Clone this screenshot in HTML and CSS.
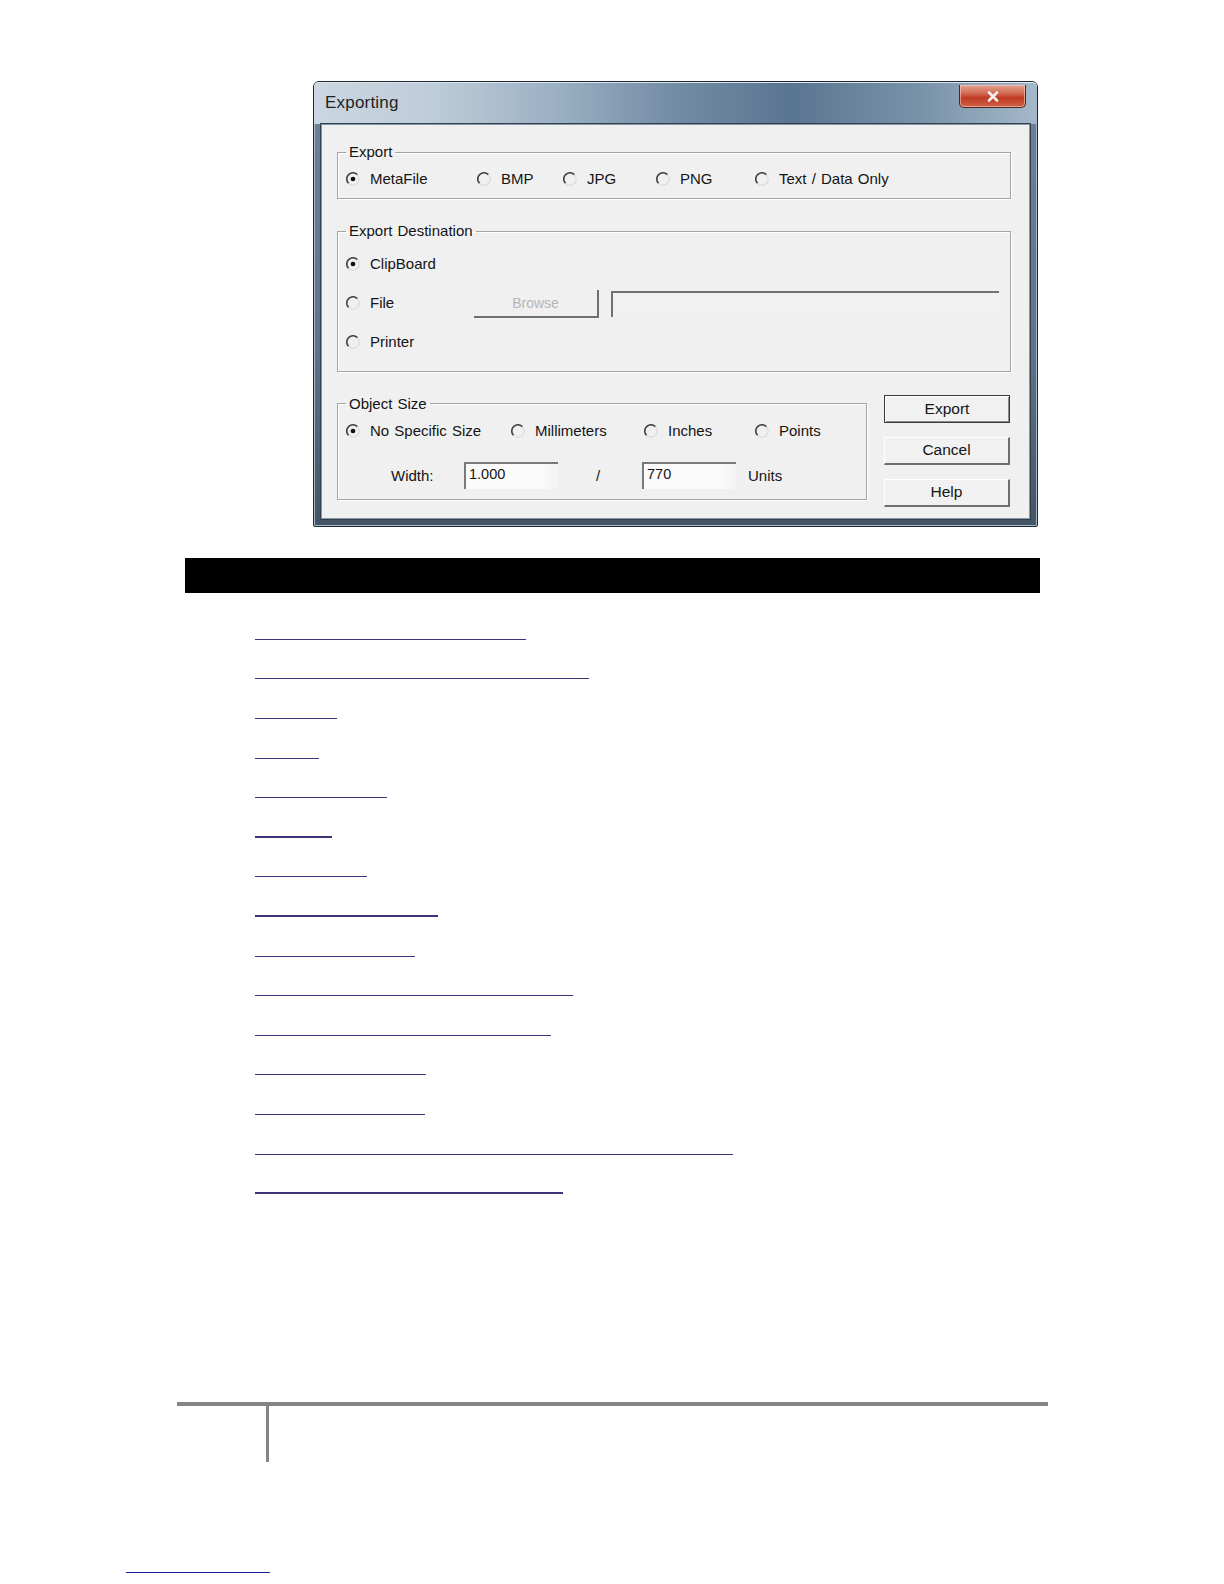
FILE: index.html
```html
<!DOCTYPE html>
<html lang="en">
<head>
<meta charset="utf-8">
<title>Exporting</title>
<link rel="stylesheet" href="styles.css">
</head>
<body>
<div class="page">
  <svg class="defs" width="0" height="0" aria-hidden="true">
    <symbol id="radio-off" viewBox="0 0 13 13">
      <path d="M10.6 2.4 A5.7 5.7 0 0 0 2.4 10.6" fill="none" stroke="#444444" stroke-width="1.5"/>
      <path d="M10.6 2.4 A5.7 5.7 0 0 1 2.4 10.6" fill="none" stroke="#d8d8d8" stroke-width="1"/>
    </symbol>
    <symbol id="radio-on" viewBox="0 0 13 13">
      <path d="M10.6 2.4 A5.7 5.7 0 0 0 2.4 10.6" fill="none" stroke="#444444" stroke-width="1.5"/>
      <path d="M10.6 2.4 A5.7 5.7 0 0 1 2.4 10.6" fill="none" stroke="#d8d8d8" stroke-width="1"/>
      <circle cx="6.5" cy="6.5" r="2.2" fill="#111111"/>
    </symbol>
  </svg>

  <div class="dialog-wrap">
    <div class="window">
      <div class="titlebar">
        <span class="title">Exporting</span>
        <div class="close">
          <svg width="14" height="11" viewBox="0 0 14 11"><path d="M3 1.5 L11 9.5 M11 1.5 L3 9.5" stroke="#f4eeee" stroke-width="2.6" stroke-linecap="round"/></svg>
        </div>
      </div>
      <div class="client">
        <fieldset class="group group-export">
          <legend>Export</legend>
          <div class="radio-row cols-export">
            <span class="radio"><svg><use href="#radio-on"/></svg>MetaFile</span>
            <span class="radio"><svg><use href="#radio-off"/></svg>BMP</span>
            <span class="radio"><svg><use href="#radio-off"/></svg>JPG</span>
            <span class="radio"><svg><use href="#radio-off"/></svg>PNG</span>
            <span class="radio"><svg><use href="#radio-off"/></svg>Text / Data Only</span>
          </div>
        </fieldset>

        <fieldset class="group group-dest">
          <legend>Export Destination</legend>
          <div class="dest-row">
            <span class="radio"><svg><use href="#radio-on"/></svg>ClipBoard</span>
          </div>
          <div class="dest-row">
            <span class="radio dest-label"><svg><use href="#radio-off"/></svg>File</span>
            <span class="browse">Browse</span>
            <span class="path-field"></span>
          </div>
          <div class="dest-row">
            <span class="radio"><svg><use href="#radio-off"/></svg>Printer</span>
          </div>
        </fieldset>

        <div class="bottom-row">
          <fieldset class="group group-size">
            <legend>Object Size</legend>
            <div class="radio-row cols-size">
              <span class="radio"><svg><use href="#radio-on"/></svg>No Specific Size</span>
              <span class="radio"><svg><use href="#radio-off"/></svg>Millimeters</span>
              <span class="radio"><svg><use href="#radio-off"/></svg>Inches</span>
              <span class="radio"><svg><use href="#radio-off"/></svg>Points</span>
            </div>
            <div class="size-row">
              <span class="size-label">Width:</span>
              <span class="num-field">1.000</span>
              <span class="slash">/</span>
              <span class="num-field">770</span>
              <span class="units">Units</span>
            </div>
          </fieldset>
          <div class="buttons">
            <span class="btn btn-default">Export</span>
            <span class="btn">Cancel</span>
            <span class="btn">Help</span>
          </div>
        </div>
      </div>
    </div>
  </div>

  <div class="black-bar"></div>

  <ul class="toc">
    <li><a class="toc-link" href="#" style="width:271px"></a></li>
    <li><a class="toc-link" href="#" style="width:334px"></a></li>
    <li><a class="toc-link" href="#" style="width:82px"></a></li>
    <li><a class="toc-link" href="#" style="width:64px"></a></li>
    <li><a class="toc-link" href="#" style="width:132px"></a></li>
    <li><a class="toc-link thick" href="#" style="width:77px"></a></li>
    <li><a class="toc-link" href="#" style="width:112px"></a></li>
    <li><a class="toc-link thick" href="#" style="width:183px"></a></li>
    <li><a class="toc-link" href="#" style="width:160px"></a></li>
    <li><a class="toc-link" href="#" style="width:318px"></a></li>
    <li><a class="toc-link" href="#" style="width:296px"></a></li>
    <li><a class="toc-link" href="#" style="width:171px"></a></li>
    <li><a class="toc-link" href="#" style="width:170px"></a></li>
    <li><a class="toc-link" href="#" style="width:478px"></a></li>
    <li><a class="toc-link thick" href="#" style="width:308px"></a></li>
  </ul>

  <footer class="footer">
    <div class="hrule"></div>
    <div class="vrule"></div>
    <a class="page-link" href="#"></a>
  </footer>
</div>
</body>
</html>
```

FILE: styles.css
```css
* { box-sizing: border-box; }

html, body {
  margin: 0;
  padding: 0;
  background: #ffffff;
  overflow: hidden;
}

body {
  font-family: "Liberation Sans", Arial, sans-serif;
  font-size: 15px;
  word-spacing: 1px;
  color: #141414;
}

.page {
  position: relative;
  width: 1224px;
  height: 1584px;
  overflow: hidden;
}

.defs {
  position: absolute;
  left: 0;
  top: 0;
  width: 0;
  height: 0;
  overflow: hidden;
}

/* ---------- dialog ---------- */
.dialog-wrap {
  padding: 81px 0 0 313px;
}

.window {
  width: 725px;
  height: 446px;
  border: 1px solid #1f2730;
  border-radius: 6px 6px 2px 2px;
  background: linear-gradient(180deg, #6d8298 0%, #5f7489 60%, #435465 100%);
  padding-bottom: 7px;
  display: flex;
  flex-direction: column;
  box-shadow: inset 0 0 0 1px #a9b9c8;
}

.titlebar {
  height: 42px;
  flex: none;
  display: flex;
  align-items: center;
  padding: 0 11px;
  border-radius: 5px 5px 0 0;
  background: linear-gradient(90deg, #cad6e1 0%, #bfcdda 16%, #9cb1c4 33%, #728ca5 50%, #5a7590 66%, #7892a9 84%, #a4b8c9 100%);
  box-shadow: inset 0 1px 0 #dfe7ee;
}

.title {
  font-size: 17px;
  color: #1f1f1f;
  letter-spacing: 0.2px;
}

.close {
  margin-left: auto;
  align-self: flex-start;
  margin-top: 3px;
  width: 67px;
  height: 23px;
  border: 1px solid #4d2720;
  border-top: none;
  border-radius: 0 0 5px 5px;
  background: linear-gradient(180deg, #e3a392 0%, #d46a52 38%, #bf3a22 58%, #cf6248 100%);
  display: flex;
  align-items: center;
  justify-content: center;
  box-shadow: inset 0 0 0 1px rgba(255, 215, 205, 0.55);
}

.client {
  flex: 1;
  margin: 0 7px;
  border: 1px solid #8596a7;
  background: #f0f0f0;
  padding: 18px 18px 0 15px;
  box-shadow: 0 0 0 1px #33414f;
}

/* group boxes */
.group {
  margin: 0;
  min-width: 0;
  border: 1px solid #a4a4a4;
  box-shadow: inset 1px 1px 0 #ffffff, 1px 1px 0 #ffffff;
  padding: 0 8px;
}

.group legend {
  padding: 0 3px;
  line-height: 18px;
  height: 18px;
  color: #141414;
}

.group-export {
  padding-top: 8px;
  padding-bottom: 9px;
}

.group-dest {
  margin-top: 23px;
  padding-top: 4px;
  padding-bottom: 9px;
}

.group-size {
  width: 530px;
  flex: none;
  padding-top: 8px;
  padding-bottom: 10px;
}

.radio-row {
  display: grid;
  height: 20px;
}

.cols-export {
  grid-template-columns: 131px 86px 93px 99px auto;
}

.cols-size {
  grid-template-columns: 165px 133px 111px auto;
}

.radio {
  display: flex;
  align-items: center;
  gap: 10px;
  height: 20px;
  line-height: 20px;
  white-space: nowrap;
}

.radio svg {
  width: 14px;
  height: 14px;
  flex: none;
}

/* destination */
.dest-row {
  height: 39.2px;
  display: flex;
  align-items: center;
}

.dest-label {
  width: 128px;
  flex: none;
}

.browse {
  width: 125px;
  height: 28px;
  flex: none;
  border-right: 2px solid #6f6f6f;
  border-bottom: 2px solid #6f6f6f;
  color: #b5b5b5;
  font-size: 14px;
  display: flex;
  align-items: center;
  justify-content: center;
  margin-top: 2px;
}

.path-field {
  flex: 1;
  height: 26px;
  margin-left: 12px;
  margin-right: 3px;
  border-top: 2px solid #727272;
  border-left: 2px solid #727272;
  background: #f1f1f1;
  margin-top: 2px;
}

/* object size */
.bottom-row {
  margin-top: 23px;
  display: flex;
  align-items: flex-start;
  gap: 17px;
}

.size-row {
  margin-top: 21px;
  height: 27px;
  display: flex;
  align-items: center;
}

.size-label {
  width: 118px;
  padding-left: 45px;
  flex: none;
}

.num-field {
  width: 94px;
  height: 27px;
  flex: none;
  border-top: 2px solid #7a7a7a;
  border-left: 2px solid #7a7a7a;
  background: linear-gradient(90deg, #fbfbfb 0%, #fbfbfb 80%, #f3f3f3 100%);
  padding-left: 3px;
  line-height: 21px;
  font-size: 14.5px;
}

.slash {
  width: 84px;
  padding-left: 38px;
  flex: none;
}

.units {
  margin-left: 12px;
}

.buttons {
  width: 126px;
  flex: none;
  margin-top: 0;
  display: flex;
  flex-direction: column;
  gap: 14px;
}

.btn {
  height: 28px;
  display: flex;
  align-items: center;
  justify-content: center;
  background: #f1f1f1;
  border-top: 1px solid #ffffff;
  border-left: 1px solid #ffffff;
  border-right: 2px solid #6e6e6e;
  border-bottom: 2px solid #6e6e6e;
  font-size: 15.5px;
}

.btn-default {
  border: 1px solid #3a3a3a;
  box-shadow: inset 1px 1px 0 #ffffff, inset -1px -1px 0 #8a8a8a;
}

/* ---------- document part ---------- */
.black-bar {
  margin: 30.5px 0 0 185px;
  width: 855px;
  height: 35.5px;
  background: #000000;
}

.toc {
  list-style: none;
  margin: 7.3px 0 0 254.5px;
  padding: 0;
}

.toc li {
  height: 39.6px;
  display: flex;
  align-items: flex-end;
}

.toc-link {
  display: block;
  height: 1px;
  background: #3b3679;
}

.toc-link.thick {
  height: 2px;
}

.footer {
  margin-top: 207.7px;
}

.hrule {
  margin-left: 177px;
  width: 871px;
  height: 4px;
  background: #858585;
}

.vrule {
  margin-left: 265.5px;
  width: 3px;
  height: 56.6px;
  background: #858585;
}

.page-link {
  display: block;
  margin: 110px 0 0 126.3px;
  width: 143.4px;
  height: 1px;
  background: #1f1f99;
}
```
